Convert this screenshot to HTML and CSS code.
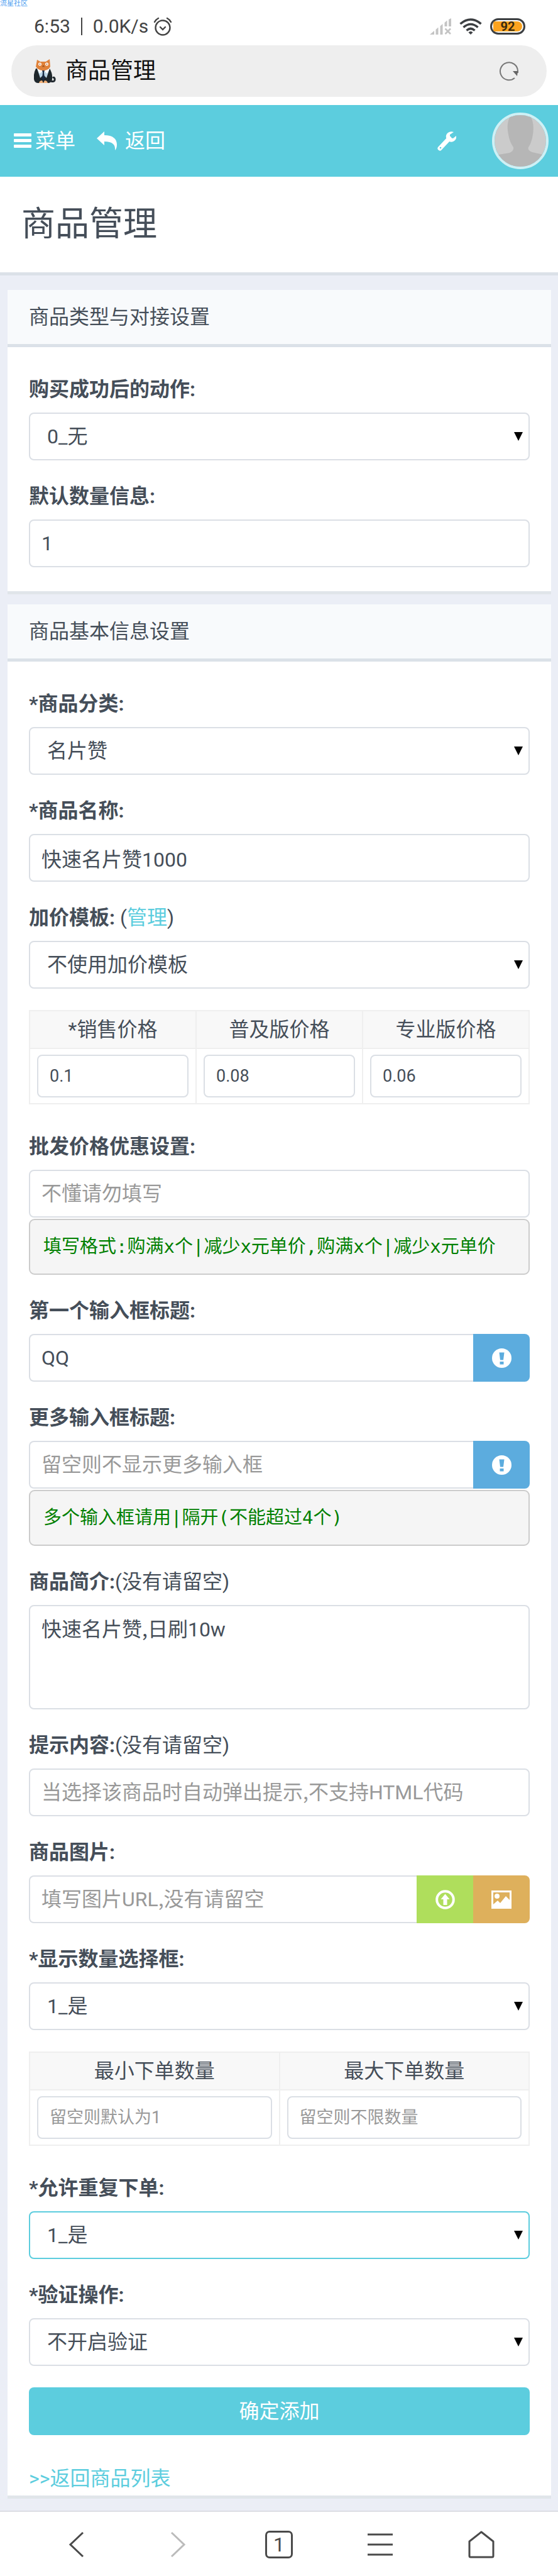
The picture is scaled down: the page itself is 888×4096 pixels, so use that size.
FILE: index.html
```html
<!DOCTYPE html>
<html lang="zh-CN">

<head>
  <meta charset="UTF-8">
  <meta name="viewport" content="width=device-width, initial-scale=1.0">
  <title>商品管理</title>
  <link rel="stylesheet" href="styles.css">
</head>

<body>
  <span class="mark">流星社区</span>
  <div class="status">
    <span class="time">6:53</span>
    <span class="line"></span>
    <span class="speed">0.0K/s</span>
    <svg class="alarm" width="30" height="30" viewBox="0 0 30 30" fill="none" stroke="#444" stroke-width="2.4" stroke-linecap="round">
      <circle cx="15" cy="17" r="11.5" />
      <path d="M11 16l4 4 4-4M2 8q2-4 6-6M28 8q-2-4-6-6" />
    </svg>
    <div class="status-right">
      <svg width="34" height="26" viewBox="0 0 34 26" fill="#c4c4c4">
        <path d="M0 26l7-6v6zM9.500 26v-8l4-3.500v11.500zM16.500 26V12.500l4-3.500v17zM23.500 13V7l4-3.500V13zM30 13V2l4-2v13z" />
        <path d="M24.500 16.500l8.500 8.500M33 16.500L24.500 25" stroke="#c4c4c4" stroke-width="2.600" />
      </svg>
      <svg width="36" height="26" viewBox="0 0 36 26" fill="none" stroke="#3c3f42" stroke-width="3.600">
        <path d="M1.500 9Q18-5 34.500 9M6.500 14.500Q18 4.500 29.500 14.500M11.500 19.500Q18 13.500 24.500 19.500" />
        <path d="M15 22.500q3-2.500 6 0l-3 3z" fill="#3c3f42" stroke-width="1" />
      </svg>
      <span class="battery"><b>92</b></span>
    </div>
  </div>

  <div class="top">
    <div class="address">
      <svg width="36" height="40" viewBox="0 0 36 40">
        <path d="M27 36q7 2 6-4-1-3-3-1" fill="none" stroke="#222a30" stroke-width="3" />
        <path d="M3 16Q-1 24 0 33q1 6 7 6h15q6 0 7-6 1-9-4-17z" fill="#1f272c" />
        <path d="M5 16h20l-5 15-5-5-5 5z" fill="#bcd6e6" />
        <path d="M5 16l10 3 10-3-4 8-6-5-6 5z" fill="#fff" />
        <path d="M13 19h4l-1 3 1 10-2 3-2-3 1-10z" fill="#182b45" />
        <path d="M5 2l5 3h9l6-4 1 12q-3 6-11 6T3 13z" fill="#e0823a" />
        <circle cx="9.500" cy="9" r="2.500" fill="#fff" />
        <circle cx="20.500" cy="9" r="2.500" fill="#fff" />
        <circle cx="9.500" cy="9" r="1" fill="#b5652a" />
        <circle cx="20.500" cy="9" r="1" fill="#b5652a" />
        <path d="M14 11h2l1 3-2-1-2 1z" fill="#a1541f" />
        <path d="M8 39q1-4 5-4l2 4zM22 39q-1-4-5-4l-2 4z" fill="#f3b27a" />
      </svg>
      <span>商品管理</span>
      <svg class="reload" width="32" height="32" viewBox="0 0 32 32">
        <path d="M25 27A14 14 0 1 1 30 16v3" fill="none" stroke="#777" stroke-width="2" />
        <path d="M22 16h8l-1 8z" fill="#666" />
      </svg>
    </div>
  </div>

  <header>
    <a href="#">
      <svg width="28" height="26" viewBox="0 0 28 26" fill="#fff">
        <rect width="28" height="5" rx="1" y="1" />
        <rect width="28" height="5" rx="1" y="10" />
        <rect width="28" height="5" rx="1" y="19" />
      </svg>
      <span>菜单</span>
    </a>
    <a href="#" class="back">
      <svg width="33" height="30" viewBox="0 0 33 30" fill="#fff">
        <path d="M0 11L12 0v6c14 0 20 6 20 15 0 4-1 7-3 9 1-9-4-14-17-14v6z" />
      </svg>
      <span>返回</span>
    </a>
    <button class="wrench" aria-label="设置">
      <svg width="30" height="31" viewBox="0 0 30 31">
        <path d="M19 11L4 27" stroke="#fff" stroke-width="7" stroke-linecap="round" />
        <path d="M26 1l-6 4v5l5 1 5-4q1 5-3 8-4 3-8 1-4-2-5-6-1-5 3-8 4-3 9-1z" fill="#fff" />
        <circle cx="5" cy="26" r="1.300" fill="#5ccdde" />
      </svg>
    </button>
    <a href="#" class="avatar" aria-label="用户">
      <svg width="82" height="82" viewBox="0 0 82 82">
        <rect width="82" height="82" fill="#cbcbcb" />
        <path d="M26 0Q18 12 22 31q2 12 8 20 1 6-6 9L0 64v18h82V64l-22-5q-8-3-6-8 5-7 7-20 3-20-5-31z" fill="#b6b6b6" />
      </svg>
    </a>
  </header>

  <h1>商品管理</h1>

  <form class="main">
    <section class="panel">
      <h3>商品类型与对接设置</h3>
      <div class="panel-body">
        <div class="group">
          <label for="action">购买成功后的动作:</label>
          <select id="action" class="control"><option>0_无</option></select>
        </div>
        <div class="group">
          <label for="num">默认数量信息:</label>
          <input id="num" class="control" type="text" value="1">
        </div>
      </div>
    </section>

    <section class="panel">
      <h3>商品基本信息设置</h3>
      <div class="panel-body">
        <div class="group">
          <label for="cate">*商品分类:</label>
          <select id="cate" class="control"><option>名片赞</option></select>
        </div>
        <div class="group">
          <label for="name">*商品名称:</label>
          <input id="name" class="control" type="text" value="快速名片赞1000">
        </div>
        <div class="group">
          <div class="label"><label for="tpl">加价模板:</label> (<a href="#">管理</a>)</div>
          <select id="tpl" class="control"><option>不使用加价模板</option></select>
        </div>
        <table>
          <tr>
            <th><label for="price1">*销售价格</label></th>
            <th><label for="price2">普及版价格</label></th>
            <th><label for="price3">专业版价格</label></th>
          </tr>
          <tr>
            <td><input id="price1" class="control small" type="text" value="0.1"></td>
            <td><input id="price2" class="control small" type="text" value="0.08"></td>
            <td><input id="price3" class="control small" type="text" value="0.06"></td>
          </tr>
        </table>
        <div class="group">
          <label for="batch">批发价格优惠设置:</label>
          <input id="batch" class="control" type="text" placeholder="不懂请勿填写">
          <pre>填写格式:购满x个|减少x元单价,购满x个|减少x元单价</pre>
        </div>
        <div class="group">
          <label for="input1">第一个输入框标题:</label>
          <div class="input-group">
            <input id="input1" class="control" type="text" value="QQ">
            <button type="button" class="addon blue" aria-label="说明">
              <svg width="31" height="31" viewBox="0 0 31 31">
                <circle cx="15.500" cy="15.500" r="15.500" fill="#fff" />
                <path d="M11.500 6.500h8l-1.500 12h-5zM12.500 21h6v4.500h-6z" fill="#5cacde" />
              </svg>
            </button>
          </div>
        </div>
        <div class="group">
          <label for="inputs">更多输入框标题:</label>
          <div class="input-group">
            <input id="inputs" class="control" type="text" placeholder="留空则不显示更多输入框">
            <button type="button" class="addon blue" aria-label="说明">
              <svg width="31" height="31" viewBox="0 0 31 31">
                <circle cx="15.500" cy="15.500" r="15.500" fill="#fff" />
                <path d="M11.500 6.500h8l-1.500 12h-5zM12.500 21h6v4.500h-6z" fill="#5cacde" />
              </svg>
            </button>
          </div>
          <pre>多个输入框请用|隔开(不能超过4个)</pre>
        </div>
        <div class="group">
          <div class="label"><label for="desc">商品简介:</label>(没有请留空)</div>
          <textarea id="desc" class="control">快速名片赞，日刷10w</textarea>
        </div>
        <div class="group">
          <div class="label"><label for="alert">提示内容:</label>(没有请留空)</div>
          <input id="alert" class="control" type="text" placeholder="当选择该商品时自动弹出提示，不支持HTML代码">
        </div>
        <div class="group">
          <label for="shopimg">商品图片:</label>
          <div class="input-group">
            <input id="shopimg" class="control" type="text" placeholder="填写图片URL，没有请留空">
            <button type="button" class="addon green" aria-label="上传">
              <svg width="31" height="31" viewBox="0 0 31 31">
                <circle cx="15.500" cy="15.500" r="13.300" fill="none" stroke="#fff" stroke-width="4" />
                <path d="M15.500 6.500l7 8.500h-4v9h-6v-9h-4z" fill="#fff" />
              </svg>
            </button>
            <button type="button" class="addon orange" aria-label="查看图片">
              <svg width="32" height="29" viewBox="0 0 32 29">
                <path d="M0 0h32v29H0zM3 3v19l7-6 4 4 9-11 6 6V3z" fill="#fff" fill-rule="evenodd" />
                <circle cx="9" cy="9" r="4" fill="#fff" />
              </svg>
            </button>
          </div>
        </div>
        <div class="group">
          <label for="multi">*显示数量选择框:</label>
          <select id="multi" class="control"><option>1_是</option></select>
        </div>
        <table>
          <tr>
            <th><label for="min">最小下单数量</label></th>
            <th><label for="max">最大下单数量</label></th>
          </tr>
          <tr>
            <td><input id="min" class="control small" type="text" placeholder="留空则默认为1"></td>
            <td><input id="max" class="control small" type="text" placeholder="留空则不限数量"></td>
          </tr>
        </table>
        <div class="group">
          <label for="repeat">*允许重复下单:</label>
          <select id="repeat" class="control active"><option>1_是</option></select>
        </div>
        <div class="group">
          <label for="validate">*验证操作:</label>
          <select id="validate" class="control"><option>不开启验证</option></select>
        </div>
        <button type="submit" class="submit">确定添加</button>
        <a href="#" class="list">&gt;&gt;返回商品列表</a>
      </div>
    </section>
  </form>

  <nav>
    <button aria-label="后退">
      <svg width="44" height="44" viewBox="0 0 44 44"><path d="M32 3L12 22l20 19" /></svg>
    </button>
    <button aria-label="前进" class="off">
      <svg width="44" height="44" viewBox="0 0 44 44"><path d="M12 3l20 19-20 19" /></svg>
    </button>
    <button aria-label="窗口" class="tabs"><span>1</span></button>
    <button aria-label="菜单">
      <svg width="44" height="44" viewBox="0 0 44 44"><path d="M2 6h40M2 22h40M2 38h40" /></svg>
    </button>
    <button aria-label="主页">
      <svg width="44" height="44" viewBox="0 0 44 44"><path d="M22 2L3 17v23q0 2 2 2h34q2 0 2-2V17z" stroke-linejoin="round" /></svg>
    </button>
  </nav>
</body>

</html>
```
FILE: styles.css
```css
* {
  margin: 0;
  padding: 0;
  box-sizing: border-box;
}
body {
  background: #ebeef6;
  color: #454e59;
  font-family: Roboto, "Noto Sans CJK SC", sans-serif;
  font-size: 32px;
  line-height: 46px;
}
a {
  color: #5ccdde;
  text-decoration: none;
}
button {
  border: 0;
  background: none;
  font: inherit;
}
svg {
  display: block;
  flex: none;
}
.mark {
  position: absolute;
  top: 0;
  left: 0;
  color: #4a9df0;
  font-size: 11px;
  line-height: 11px;
}

/* 状态栏 */
.status {
  display: flex;
  align-items: center;
  height: 72px;
  padding: 12px 52px 0 54px;
  background: #fff;
  color: #444;
  font-size: 30px;
}
.line {
  width: 2px;
  height: 28px;
  margin: 0 17px;
  background: #444;
}
.alarm {
  margin-left: 8px;
}
.status-right {
  display: flex;
  align-items: center;
  gap: 13px;
  margin-left: auto;
}
.battery {
  width: 56px;
  height: 26px;
  padding: 2px;
  border: 3px solid #3c3f42;
  border-radius: 13px;
}
.battery b {
  display: block;
  border-radius: 3px 8px 8px 3px;
  background: #fba31f;
  color: #3a2a10;
  font-size: 20px;
  line-height: 16px;
  text-align: center;
}

/* 地址栏 */
.top {
  padding: 0 18px 13px;
  background: #fff;
}
.address {
  display: flex;
  align-items: center;
  height: 82px;
  padding: 0 44px 0 36px;
  border-radius: 41px;
  background: #eee;
  color: #111;
  font-size: 36px;
}
.address span {
  margin-left: 14px;
}
.reload {
  margin-left: auto;
}

header {
  display: flex;
  align-items: center;
  height: 114px;
  padding: 0 15px 0 22px;
  background: #5ccdde;
}
header a {
  display: flex;
  align-items: center;
  gap: 6px;
  color: #fff;
}
header .back {
  gap: 12px;
  margin-left: 34px;
}
.wrench {
  margin-left: auto;
}
.avatar {
  width: 90px;
  height: 90px;
  margin-left: 57px;
  border: 4px solid #cef0f5;
  border-radius: 50%;
  overflow: hidden;
}
h1 {
  padding: 36px 34px 37px;
  border-bottom: 5px solid #dbe1e8;
  background: #fff;
  font-size: 54px;
  font-weight: normal;
  line-height: 79px;
}

/* 面板 */
.main {
  padding: 23px 11px 24px 12px;
}
.panel {
  background: #fff;
  box-shadow: 0 5px 0 #e0e5ea;
}
.panel + .panel {
  margin-top: 21px;
}
.panel h3 {
  padding: 20px 34px;
  border-bottom: 5px solid #dbe1e8;
  background: #f8fafc;
  font-size: 32px;
  font-weight: normal;
}
.panel-body {
  padding: 44px 34px 4px;
}
.group {
  margin-bottom: 34px;
}
.group > label,
.label {
  display: block;
  margin-bottom: 14px;
}
.group label {
  font-weight: bold;
}
.control {
  display: block;
  width: 100%;
  height: 76px;
  padding: 0 18px;
  border: 2px solid #dbdfe5;
  border-radius: 8px;
  background: #fff;
  color: #454e59;
  font: inherit;
  font-variant-east-asian: proportional-width;
  outline: 0;
}
.control::placeholder {
  color: #999;
}
select.control {
  padding: 0 27px;
  appearance: none;
  background: #fff url("data:image/svg+xml,%3Csvg xmlns='http://www.w3.org/2000/svg' width='14' height='14'%3E%3Cpath d='M0 0h14L7 14z'/%3E%3C/svg%3E") no-repeat right 9px center;
}
textarea.control {
  height: 166px;
  padding: 14px 18px;
  resize: none;
}
.control.active {
  border-color: #5ccdde;
}
.control.small {
  height: 68px;
  font-size: 27px;
}
table {
  width: 100%;
  margin-bottom: 44px;
  border-collapse: collapse;
  table-layout: fixed;
}
th,
td {
  border: 2px solid #efefef;
}
th {
  height: 60px;
  background: #f8f8f8;
  font-weight: normal;
}
td {
  padding: 9px 11px;
}
pre {
  margin-top: 2px;
  padding: 21px;
  border: 2px solid #ccc;
  border-radius: 9px;
  background: #f5f5f5;
  color: green;
  font-family: "DejaVu Sans Mono", "Noto Sans CJK SC", monospace;
  font-size: 29px;
  line-height: 43px;
  overflow: hidden;
}
.input-group {
  display: flex;
}
.input-group .control {
  flex: 1;
  min-width: 0;
  border-right: 0;
  border-radius: 8px 0 0 8px;
}
.addon {
  display: flex;
  align-items: center;
  justify-content: center;
  width: 90px;
}
.addon:last-child {
  border-radius: 0 8px 8px 0;
}
.blue {
  background: #5cacde;
}
.green {
  background: #afde5c;
}
.orange {
  background: #deb05c;
}
.submit {
  display: block;
  width: 100%;
  height: 76px;
  border-radius: 8px;
  background: #5ccdde;
  color: #fff;
}
.list {
  display: block;
  margin-top: 46px;
}

/* 底部导航 */
nav {
  display: grid;
  grid-template-columns: repeat(5, 1fr);
  align-items: center;
  height: 105px;
  padding: 0 42px;
  border-top: 2px solid #dcdde3;
  background: #fff;
}
nav button {
  display: flex;
  justify-content: center;
}
nav svg {
  fill: none;
  stroke: #4a4a4a;
  stroke-width: 3;
}
nav .off svg {
  stroke: #bbb;
}
.tabs span {
  width: 44px;
  height: 44px;
  border: 3px solid #4a4a4a;
  border-radius: 7px;
  color: #4a4a4a;
  line-height: 38px;
}
```
